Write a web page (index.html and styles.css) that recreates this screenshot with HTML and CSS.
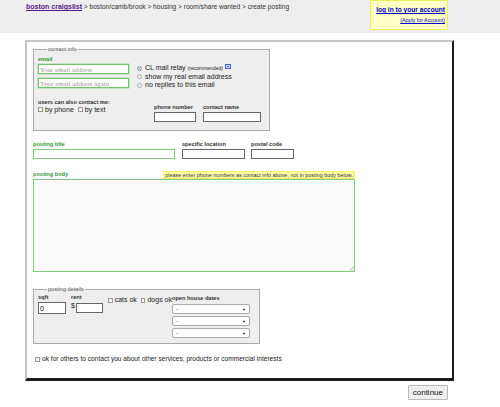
FILE: index.html
```html
<!DOCTYPE html>
<html>
<head>
<meta charset="utf-8">
<link rel="stylesheet" href="styles.css">
</head>
<body>
<div class="topbar">
  <div class="crumbs"><a class="home">boston craigslist</a> &gt; boston/camb/brook &gt; housing &gt; room/share wanted &gt; create posting</div>
  <div class="login">
    <a class="login-link">log in to your account</a>
    <a class="apply">(Apply for Account)</a>
  </div>
</div>

<div class="form">
  <fieldset class="box contact">
    <legend>contact info</legend>
    <div class="contact-top">
      <div class="email-col">
        <div class="lbl green">email</div>
        <input class="in email" placeholder="Your email address">
        <input class="in email email2" placeholder="Type email address again">
      </div>
      <div class="radios">
        <label class="radio-row"><span class="radio on"></span>CL mail relay <small>(recommended)</small><svg class="help" width="6" height="5" viewBox="0 0 6 5"><rect x="0.5" y="0.5" width="5" height="4" fill="#cfe0ff" stroke="#3f63d6"/><rect x="2" y="2" width="2" height="1" fill="#3f63d6"/></svg></label>
        <label class="radio-row"><span class="radio"></span>show my real email address</label>
        <label class="radio-row"><span class="radio"></span>no replies to this email</label>
      </div>
    </div>
    <div class="contact-bottom">
      <div class="also">
        <div class="lbl">users can also contact me:</div>
        <div class="checks">
          <span class="check"></span>by phone
          <span class="check second"></span>by text
        </div>
      </div>
      <div class="field phone">
        <div class="lbl">phone number</div>
        <input class="in plain w42">
      </div>
      <div class="field">
        <div class="lbl">contact name</div>
        <input class="in plain w58">
      </div>
    </div>
  </fieldset>

  <div class="title-row">
    <div class="field">
      <div class="lbl green">posting title</div>
      <input class="in greenin w142">
    </div>
    <div class="field">
      <div class="lbl">specific location</div>
      <input class="in plain w63">
    </div>
    <div class="field">
      <div class="lbl">postal code</div>
      <input class="in plain w43">
    </div>
  </div>

  <div class="body-head">
    <div class="lbl green">posting body</div>
    <div class="note">please enter phone numbers as contact info above, not in posting body below.</div>
  </div>
  <div class="body-wrap">
    <textarea class="bodytext"></textarea>
    <svg class="grip" width="5" height="5" viewBox="0 0 5 5"><path d="M4.5 0.5 L0.5 4.5 M4.5 2.5 L2.5 4.5" stroke="#aaa" stroke-width="0.8"/></svg>
  </div>

  <fieldset class="box details">
    <legend>posting details</legend>
    <div class="details-row">
      <div class="field sqft">
        <div class="lbl">sqft</div>
        <input class="in plain sq" value="0">
      </div>
      <div class="field rent">
        <div class="lbl">rent</div>
        <div class="rent-in"><span class="dollar">$</span><input class="in plain rt"></div>
      </div>
      <div class="pets">
        <span class="check"></span>cats ok
        <span class="check second"></span>dogs ok
      </div>
      <div class="field dates">
        <div class="lbl">open house dates</div>
        <div class="sel"><span>-</span><span class="arrow">▼</span></div>
        <div class="sel"><span>-</span><span class="arrow">▼</span></div>
        <div class="sel"><span>-</span><span class="arrow">▼</span></div>
      </div>
    </div>
  </fieldset>

  <div class="optin"><span class="check"></span>ok for others to contact you about other services, products or commercial interests</div>
</div>

<div class="actions"><button class="continue">continue</button></div>
</body>
</html>
```

FILE: styles.css
```css
* { box-sizing: border-box; }
body {
  margin: 0;
  font-family: "Liberation Sans", Arial, sans-serif;
  background: #fff;
  color: #222;
}
.topbar {
  height: 33px;
  background: #eeeeee;
  display: flex;
  justify-content: space-between;
  align-items: flex-start;
  padding: 0 52px 0 26px;
}
.crumbs {
  font-size: 6.6px;
  line-height: 8px;
  padding-top: 3px;
  color: #333;
}
.crumbs .home {
  font-size: 7px;
  color: #551a8b;
  font-weight: bold;
  text-decoration: underline;
}
.login {
  width: 78px;
  height: 30px;
  background: #ffffc6;
  border: 1px solid #eeee55;
  display: flex;
  flex-direction: column;
  align-items: flex-end;
  padding: 5px 2px 0 0;
}
.login-link {
  font-size: 6.6px;
  line-height: 8px;
  font-weight: bold;
  color: #0000cc;
  text-decoration: underline;
  white-space: nowrap;
}
.apply {
  font-size: 5.3px;
  line-height: 6px;
  margin-top: 3px;
  color: #0000cc;
  text-decoration: underline;
  white-space: nowrap;
}
.form {
  margin: 7px 0 0 25px;
  width: 429px;
  height: 341px;
  border-left: 2px solid #c6c6c6;
  border-top: 2px solid #c6c6c6;
  border-right: 2px solid #1c1c1c;
  border-bottom: 3px solid #1c1c1c;
  padding: 4px 0 0 6px;
  display: flex;
  flex-direction: column;
  align-items: flex-start;
}
.box {
  margin: 0;
  background: #eeeeee;
  border: 1px solid #aaaaaa;
  min-inline-size: 0;
}
legend {
  font-size: 5.6px;
  line-height: 6px;
  color: #555;
  margin-left: 9px;
  padding: 0 1px;
}
.lbl {
  font-size: 5.6px;
  line-height: 6px;
  font-weight: bold;
  color: #333;
  white-space: nowrap;
}
.lbl.green { color: #339933; }
.in {
  display: block;
  margin: 0;
  background: #fff;
  font-size: 6.8px;
  padding: 0 1px;
}
.in::placeholder { color: #999; }
.plain { border: 1px solid #666; height: 10px; }
.greenin { border: 1px solid #7ccc7c; height: 10px; margin-top: 1px; }

.contact {
  width: 237px;
  height: 85px;
  padding: 3px 4px 0 4px;
}
.contact-top { display: flex; }
.email-col { width: 99px; }
.email-col .lbl { margin-top: 1px; }
.email {
  width: 91px;
  height: 10px;
  margin-top: 2px;
  border: 1px solid #6cc46c;
  box-shadow: 0 0 0 0.5px #a8dca8;
  font-family: "Liberation Serif", serif;
}
.email2 { margin-top: 4px; }
.radios {
  padding-top: 9px;
  display: flex;
  flex-direction: column;
}
.radio-row {
  font-size: 7px;
  line-height: 8.5px;
  display: flex;
  align-items: center;
  color: #222;
  white-space: nowrap;
}
.radio-row small { font-size: 5px; margin-left: 2px; }
.radio {
  width: 5px;
  height: 5px;
  border-radius: 50%;
  border: 1px solid #aaa;
  background: #f6f6f6;
  margin-right: 3px;
}
.radio.on { background: #777; box-shadow: inset 0 0 0 1px #eee; }
.help {
  margin-left: 2px;
  margin-bottom: 3px;
}
.contact-bottom {
  display: flex;
  align-items: flex-start;
  margin-top: 9px;
}
.also { width: 116px; }
.checks, .pets, .optin {
  font-size: 7px;
  line-height: 8px;
  display: flex;
  align-items: center;
  white-space: nowrap;
  color: #222;
}
.checks { margin-top: 1px; }
.check {
  display: inline-block;
  width: 5px;
  height: 5px;
  border: 1px solid #9a9a9a;
  background: #f4f4f4;
  margin-right: 2px;
}
.check.second { margin-left: 4px; }
.phone { margin-right: 7px; }
.field .lbl + .in { margin-top: 2px; }
.contact-bottom .field { margin-top: 5px; }
.w42 { width: 42px; }
.w58 { width: 58px; }
.w63 { width: 63px; }
.w43 { width: 43px; }
.w142 { width: 142px; }

.title-row {
  display: flex;
  gap: 7px;
  margin-top: 10px;
}
.title-row .field:last-child { margin-left: -1px; }

.body-head {
  width: 322px;
  display: flex;
  justify-content: space-between;
  align-items: flex-end;
  margin-top: 12px;
}
.body-head .lbl { margin-bottom: 2px; }
.note {
  font-size: 5.45px;
  line-height: 6px;
  background: #ffffa8;
  border: 1px solid #f0f060;
  padding: 0 1px;
  color: #333;
}
.body-wrap { position: relative; }
.bodytext {
  display: block;
  margin: 0;
  width: 322px;
  height: 93px;
  border: 1px solid #7ccc7c;
  background: #fafafa;
  resize: none;
}
.grip {
  position: absolute;
  right: 1px;
  bottom: 1px;
}

.details {
  margin-top: 14px;
  width: 227px;
  height: 58px;
  padding: 2px 4px 0 4px;
}
.details-row { display: flex; align-items: flex-start; }
.sqft { width: 33px; }
.sq { width: 28px; height: 12px; margin-top: 2px !important; font-size: 7px; }
.rent { width: 37px; }
.rent-in { display: flex; align-items: flex-start; margin-top: 2px; }
.dollar { font-size: 7px; line-height: 7px; margin-right: 1px; }
.rt { width: 27px; height: 10px; margin-top: 1px; }
.pets { width: 64px; margin-top: 2px; overflow: visible; }
.dates { width: 78px; }
.dates .lbl { margin-top: 1px; }
.sel {
  width: 78px;
  height: 10px;
  margin-top: 2px;
  background: #fff;
  border: 1px solid #aaa;
  border-radius: 2px;
  display: flex;
  justify-content: space-between;
  align-items: center;
  padding: 0 3px;
  font-size: 6px;
  color: #222;
}
.dates .lbl + .sel { margin-top: 3px; }
.arrow { font-size: 4px; }

.optin { margin-top: 11px; margin-left: 2px; font-size: 6.6px; }

.actions {
  width: 454px;
  display: flex;
  justify-content: flex-end;
  padding-right: 6px;
  margin-top: 4px;
}
.continue {
  font-family: "Liberation Sans", Arial, sans-serif;
  font-size: 8px;
  height: 15px;
  padding: 0 4px;
  background: #efefef;
  border: 1px solid #b8b8b8;
  border-radius: 1px;
  color: #111;
}
```
